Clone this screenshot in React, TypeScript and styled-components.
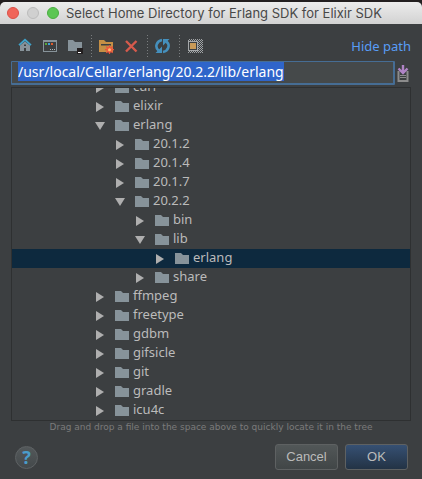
import React, { useEffect, useRef } from "react";
import styled, { createGlobalStyle } from "styled-components";

const GlobalStyle = createGlobalStyle`
  *, *::before, *::after { box-sizing: border-box; }
  body {
    margin: 0;
    background: #231f20;
    color: #bbbbbb;
    font: 13px/19px "Noto Sans", "Open Sans", sans-serif;
  }
  button { padding: 0; border: 0; background: none; color: inherit; font: inherit; }
`;

const Dialog = styled.main`
  display: flex;
  flex-direction: column;
  height: 100vh;
  padding-top: 2px;
`;

const TitleBar = styled.header`
  display: flex;
  flex: none;
  align-items: center;
  height: 22px;
  padding: 0 7px;
  border-radius: 5px 5px 0 0;
  background: linear-gradient(#ececec, #d2d2d2);
`;

const WindowControls = styled.div`
  display: flex;
  gap: 8px;
`;

const WindowControl = styled.button<{ $fill: string; $edge: string }>`
  width: 12px;
  height: 12px;
  border: 1px solid ${(p) => p.$edge};
  border-radius: 50%;
  background: ${(p) => p.$fill};
`;

const Title = styled.h1`
  margin: 0 0 0 7px;
  color: #484848;
  font: 400 13px/20px Inter, "Liberation Sans", sans-serif;
  white-space: nowrap;
`;

const Content = styled.div`
  display: flex;
  flex: 1;
  flex-direction: column;
  min-height: 0;
  background: #3c3f41;
`;

const Toolbar = styled.div`
  display: flex;
  flex: none;
  align-items: center;
  height: 37px;
  padding: 7px 11px 0 13px;
`;

const ToolGroup = styled.div<{ $gap?: number }>`
  display: flex;
  gap: ${(p) => p.$gap ?? 0}px;
`;

const ToolButton = styled.button`
  display: grid;
  place-items: center;
  width: 24px;
  height: 24px;
`;

const Separator = styled.span`
  width: 1px;
  height: 22px;
  margin: 0 3px 0 4px;
  background: repeating-linear-gradient(#7a7d7f 0 1px, transparent 1px 3px);
`;

const PathLink = styled.a`
  margin-left: auto;
  color: #589df6;
  text-decoration: none;
`;

const PathRow = styled.div`
  display: flex;
  flex: none;
  align-items: center;
  gap: 2px;
  margin: 0 11px 2px;
`;

const PathInput = styled.input`
  flex: 1;
  min-width: 0;
  height: 24px;
  padding: 0 6px 2px;
  border: 1px solid #466d94;
  border-width: 1px 2px 2px 1px;
  border-radius: 1px;
  outline: none;
  background: #45494a;
  color: #ffffff;
  caret-color: #dddddd;
  font: 14px/16px "Noto Sans", "Open Sans", sans-serif;
  &::selection { background: #2f65ca; color: #ffffff; }
`;

const HistoryButton = styled.button`
  display: grid;
  place-items: center start;
  width: 14px;
  height: 18px;
`;

const TreeView = styled.ul`
  display: flex;
  flex: 1;
  flex-direction: column;
  justify-content: flex-end;
  min-height: 0;
  margin: 0 11px;
  padding: 0;
  overflow: hidden;
  border: 1px solid #2e3031;
  list-style: none;
`;

const TreeRow = styled.li<{ $depth: number; $selected?: boolean }>`
  display: flex;
  flex: none;
  align-items: center;
  height: 19px;
  padding-left: ${(p) => 82 + p.$depth * 20}px;
  background: ${(p) => (p.$selected ? "#0d293e" : "transparent")};
`;

const Toggle = styled.button`
  display: grid;
  place-items: center;
  width: 12px;
  height: 19px;
  margin-right: 9px;
`;

const FolderName = styled.span`
  margin-left: 4px;
  line-height: 17px;
  padding-bottom: 2px;
`;

const Hint = styled.p`
  flex: none;
  margin: 0;
  color: #7b7b7b;
  font: 9px/13px "DejaVu Sans", sans-serif;
  text-align: center;
  white-space: nowrap;
`;

const Footer = styled.footer`
  display: flex;
  flex: none;
  align-items: center;
  gap: 7px;
  padding: 10px 14px 9px 15px;
`;

const HelpButton = styled.button`
  width: 23px;
  height: 23px;
  margin-right: auto;
  border: 1px solid #5e6264;
  border-radius: 50%;
  background: linear-gradient(#53585a, #44494b);
  color: #4a9ccb;
  font: 700 18px/20px "Noto Sans", sans-serif;
`;

const ActionButton = styled.button<{ $primary?: boolean }>`
  width: 63px;
  height: 26px;
  border: 1px solid #5e6162;
  border-radius: 3px;
  background: ${(p) =>
    p.$primary ? "linear-gradient(#365073, #233345)" : "linear-gradient(#525758, #414647)"};
  color: #bbbbbb;
  font: 400 13px/24px "Liberation Sans", Arial, sans-serif;
`;

const HomeIcon = () => (
  <svg width="18" height="16" viewBox="0 0 18 16">
    <path fillRule="evenodd" fill="#87939a" d="M4 7.5 9 3.5l5 4V13h-4v-3H8v3H4zM8 6.5V8h2V6.500z" />
    <path fill="none" stroke="#3fa2c9" strokeWidth="1.8" d="m3 7.200 6-5.400 6 5.400" />
  </svg>
);

const DesktopIcon = () => (
  <svg width="18" height="16" viewBox="0 0 18 16">
    <path fill="#87939a" fillRule="evenodd" d="M2 2h14v12H2zM3 4v9h12V4z" />
    <path fill="#58a839" d="M4 5h2v2H4z" />
    <path fill="#3fa2d9" d="M7 5h2v2H7z" />
    <path fill="#e05a2b" d="M10 5h2v2h-2z" />
    <path fill="#b0b8bc" d="M9 11h1v1H9zM11 11h1v1h-1zM13 11h1v1h-1z" />
  </svg>
);

const ProjectIcon = () => (
  <svg width="18" height="16" viewBox="0 0 18 16">
    <path fill="#87939a" d="M2 2h5l2 2h7v9H2z" />
    <path fill="#231f20" d="M11 10h6v6h-6z" />
    <path fill="#ffffff" d="M12 14h3v1h-3z" />
  </svg>
);

const NewFolderIcon = () => (
  <svg width="18" height="16" viewBox="0 0 18 16">
    <path fill="#c58f45" fillRule="evenodd" d="M1 2h5l2 2h7v10H1zM3 6v1.500h10V6z" />
    <path stroke="#e8503c" strokeWidth="1.200" d="M11.500 7.200v9M7 11.700h9M8.300 8.500l6.400 6.400M14.700 8.500l-6.400 6.400" />
    <circle cx="11.500" cy="11.700" r="3" fill="#ee5a40" />
    <circle cx="11.500" cy="11.700" r="1.500" fill="#ffc06a" />
  </svg>
);

const DeleteIcon = () => (
  <svg width="18" height="16" viewBox="0 0 18 16">
    <path stroke="#d65a4c" strokeWidth="2.400" d="m4 3 10.500 10.500M14.500 3 4 13.500" />
  </svg>
);

const RefreshIcon = () => (
  <svg width="18" height="16" viewBox="0 0 18 16">
    <g fill="none" stroke="#4590bd" strokeWidth="2.600">
      <path d="M8 2C2.500 3 0.500 9 4.500 12.500" />
      <path d="M9 14C14.500 13 16.500 7 12.500 3.500" />
    </g>
    <path fill="#4590bd" d="M1.500 15H8V8.500zM15.500 1H9v6.500z" />
  </svg>
);

const HiddenFilesIcon = () => (
  <svg width="18" height="16" viewBox="0 0 18 16">
    <defs>
      <pattern id="checks" width="2" height="2" patternUnits="userSpaceOnUse">
        <path fill="#a0a3a5" d="M0 0h1v1H0zM1 1h1v1H1z" />
      </pattern>
    </defs>
    <path fill="url(#checks)" d="M2 1h15v14H2z" />
    <path fill="#a5a8aa" d="M2 3h10v10H2z" />
    <path fill="#3c3f41" d="M3 4h8v8H3z" />
    <path fill="#c99a57" d="M4 5h6v6H4z" />
  </svg>
);

const HistoryIcon = () => (
  <svg width="12" height="17" viewBox="0 0 12 17">
    <path fill="none" stroke="#8c8c8c" strokeWidth="2" d="M2.500 7H1.500v9h9V7h-1" />
    <path fill="#8c8c8c" d="M3 10h6v1H3zM3 12h6v1H3z" />
    <path fill="none" stroke="#b084c6" strokeWidth="2.400" d="M6 0v7M1.500 3.500 6 8l4.500-4.500" />
  </svg>
);

const FolderIcon = () => (
  <svg width="14" height="12" viewBox="0 0 14 12">
    <path fill="#87939a" d="M0 0h6l2 2h6v9H0z" />
  </svg>
);

const Arrow = ({ open }: { open?: boolean }) => (
  <svg width="10" height="10" viewBox="0 0 10 10">
    <path fill="#afafaf" d={open ? "M0 1h10L5 9z" : "M1 0l8 5-8 5z"} />
  </svg>
);

type Node = { name: string; depth: number; open?: boolean; selected?: boolean };

const nodes: Node[] = [
  { name: "curl", depth: 0 },
  { name: "elixir", depth: 0 },
  { name: "erlang", depth: 0, open: true },
  { name: "20.1.2", depth: 1 },
  { name: "20.1.4", depth: 1 },
  { name: "20.1.7", depth: 1 },
  { name: "20.2.2", depth: 1, open: true },
  { name: "bin", depth: 2 },
  { name: "lib", depth: 2, open: true },
  { name: "erlang", depth: 3, selected: true },
  { name: "share", depth: 2 },
  { name: "ffmpeg", depth: 0 },
  { name: "freetype", depth: 0 },
  { name: "gdbm", depth: 0 },
  { name: "gifsicle", depth: 0 },
  { name: "git", depth: 0 },
  { name: "gradle", depth: 0 },
  { name: "icu4c", depth: 0 },
];

export default function App() {
  const path = useRef<HTMLInputElement>(null);

  useEffect(() => {
    path.current?.focus();
    path.current?.select();
  }, []);

  return (
    <Dialog>
      <GlobalStyle />
      <TitleBar>
        <WindowControls>
          <WindowControl aria-label="Close" $fill="#f0655a" $edge="#dc5048" />
          <WindowControl aria-label="Minimize" $fill="#d0d0d0" $edge="#bcbcbc" />
          <WindowControl aria-label="Zoom" $fill="#5cc653" $edge="#4aae40" />
        </WindowControls>
        <Title>Select Home Directory for Erlang SDK for Elixir SDK</Title>
      </TitleBar>
      <Content>
        <Toolbar role="toolbar">
          <ToolGroup $gap={1}>
            <ToolButton aria-label="Home"><HomeIcon /></ToolButton>
            <ToolButton aria-label="Desktop"><DesktopIcon /></ToolButton>
            <ToolButton aria-label="Project directory"><ProjectIcon /></ToolButton>
          </ToolGroup>
          <Separator />
          <ToolGroup>
            <ToolButton aria-label="New folder"><NewFolderIcon /></ToolButton>
            <ToolButton aria-label="Delete"><DeleteIcon /></ToolButton>
          </ToolGroup>
          <Separator />
          <ToolButton aria-label="Refresh"><RefreshIcon /></ToolButton>
          <Separator />
          <ToolButton aria-label="Show hidden files"><HiddenFilesIcon /></ToolButton>
          <PathLink href="#path">Hide path</PathLink>
        </Toolbar>
        <PathRow>
          <PathInput
            id="path"
            ref={path}
            aria-label="Path"
            spellCheck={false}
            defaultValue="/usr/local/Cellar/erlang/20.2.2/lib/erlang"
          />
          <HistoryButton aria-label="Recent paths"><HistoryIcon /></HistoryButton>
        </PathRow>
        <TreeView role="tree">
          {nodes.map((node) => (
            <TreeRow
              key={`${node.depth}-${node.name}`}
              role="treeitem"
              aria-level={node.depth + 1}
              aria-expanded={!!node.open}
              aria-selected={!!node.selected}
              $depth={node.depth}
              $selected={node.selected}
            >
              <Toggle aria-label={`Toggle ${node.name}`}><Arrow open={node.open} /></Toggle>
              <FolderIcon />
              <FolderName>{node.name}</FolderName>
            </TreeRow>
          ))}
        </TreeView>
        <Hint>Drag and drop a file into the space above to quickly locate it in the tree</Hint>
        <Footer>
          <HelpButton aria-label="Help">?</HelpButton>
          <ActionButton>Cancel</ActionButton>
          <ActionButton $primary>OK</ActionButton>
        </Footer>
      </Content>
    </Dialog>
  );
}
